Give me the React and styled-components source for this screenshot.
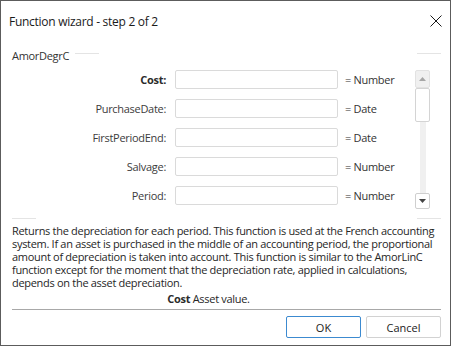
import React from 'react';
import styled, { createGlobalStyle } from 'styled-components';

const GlobalStyle = createGlobalStyle`
  html, body {
    margin: 0;
    padding: 0;
    background: #fff;
  }
  body {
    font-family: "Open Sans", "Noto Sans", sans-serif;
    font-size: 11px;
    letter-spacing: -0.3px;
    color: #222;
  }
`;

const Dialog = styled.div`
  width: 449px;
  height: 344px;
  border: 1px solid #5c5c5c;
  display: flex;
  flex-direction: column;
  background: #fff;
`;

const TitleBar = styled.div`
  height: 40px;
  padding: 0 8px;
  display: flex;
  align-items: center;
  justify-content: space-between;
  font-size: 12px;
  letter-spacing: -0.28px;
  color: #1a1a1a;
`;

const CloseButton = styled.div`
  width: 12px;
  height: 12px;
  display: flex;
  cursor: pointer;
`;

const Body = styled.div`
  flex: 1;
  display: flex;
  flex-direction: column;
  padding: 0 9px 0 11px;
`;

const LegendRow = styled.div`
  margin-top: 6px;
  height: 16px;
  display: flex;
  align-items: center;
  color: #333;
`;

const Segment = styled.div`
  width: 24px;
  height: 1px;
  background: #e4e4e4;
  align-self: flex-start;
  margin-top: ${(p) => p.top || 0}px;
  margin-left: ${(p) => p.left || 0}px;
`;

const Spacer = styled.div`
  flex: 1;
`;

const ParamsArea = styled.div`
  margin-top: 7px;
  height: 139px;
  display: flex;
`;

const ParamsGrid = styled.div`
  display: grid;
  grid-template-columns: 163px 163px 77px;
  grid-auto-rows: 19px;
  row-gap: 10px;
  align-items: center;
  align-content: start;
`;

const ParamLabel = styled.div`
  text-align: right;
  padding-right: 9px;
  color: ${(p) => (p.bold ? '#2b2b2b' : '#3c3c3c')};
  font-weight: ${(p) => (p.bold ? 700 : 400)};
`;

const ParamInput = styled.input`
  box-sizing: border-box;
  width: 163px;
  height: 19px;
  border: 1px solid #dadada;
  border-radius: 2px;
  margin: 0;
  padding: 0 4px;
  font: inherit;
  outline: none;
`;

const ParamType = styled.div`
  padding-left: 7px;
  color: #333;
`;

const Scrollbar = styled.div`
  width: 15px;
  height: 139px;
  display: flex;
  flex-direction: column;
`;

const ScrollButton = styled.div`
  box-sizing: border-box;
  height: ${(p) => p.h}px;
  border: 1px solid ${(p) => (p.disabled ? '#e2e2e2' : '#cfcfcf')};
  border-radius: 2px;
  background: ${(p) => (p.disabled ? '#f0f0f0' : '#fff')};
  display: flex;
  align-items: center;
  justify-content: center;
`;

const Thumb = styled.div`
  box-sizing: border-box;
  height: 34px;
  border: 1px solid #d4d4d4;
  border-radius: 2px;
  background: #fff;
`;

const Track = styled.div`
  flex: 1;
  display: flex;
  justify-content: center;
`;

const TrackStrip = styled.div`
  width: 6px;
  background: #f0f0f0;
`;

const BottomSegments = styled.div`
  margin-top: 9px;
  height: 1px;
  display: flex;
  justify-content: space-between;
`;

const Description = styled.div`
  margin-top: 5px;
  line-height: 13px;
  color: #262626;
  white-space: nowrap;
`;

const Hint = styled.div`
  margin-top: 3px;
  line-height: 13px;
  text-align: center;
  padding-right: 36px;
  color: #262626;

  b {
    color: #2b2b2b;
  }
`;

const Separator = styled.div`
  margin-top: 4px;
  height: 1px;
  background: #a8a8a8;
`;

const ButtonRow = styled.div`
  margin-top: 6px;
  display: flex;
  justify-content: flex-end;
  gap: 5px;
`;

const Button = styled.button`
  box-sizing: border-box;
  width: 75px;
  height: 22px;
  border: 1px solid ${(p) => (p.primary ? '#3c8ad0' : '#d2d2d2')};
  border-radius: 2px;
  background: #fff;
  font: inherit;
  color: #222;
  padding: 0;
  cursor: pointer;
`;

const params = [
  { name: 'Cost', type: 'Number', bold: true },
  { name: 'PurchaseDate', type: 'Date' },
  { name: 'FirstPeriodEnd', type: 'Date' },
  { name: 'Salvage', type: 'Number' },
  { name: 'Period', type: 'Number' },
];

const descriptionLines = [
  'Returns the depreciation for each period. This function is used at the French accounting',
  'system. If an asset is purchased in the middle of an accounting period, the proportional',
  'amount of depreciation is taken into account. This function is similar to the AmorLinC',
  'function except for the moment that the depreciation rate, applied in calculations,',
  'depends on the asset depreciation.',
];

const Arrow = ({ up, color }) => (
  <svg width="7" height="4" viewBox="0 0 7 4">
    <path d={up ? 'M0 4 L3.5 0 L7 4 Z' : 'M0 0 L3.5 4 L7 0 Z'} fill={color} />
  </svg>
);

const App = () => (
  <>
    <GlobalStyle />
    <Dialog>
      <TitleBar>
        <span>Function wizard - step 2 of 2</span>
        <CloseButton>
          <svg width="12" height="12" viewBox="0 0 12 12">
            <path d="M0.5 0.5 L11.5 11.5 M11.5 0.5 L0.5 11.5" stroke="#1a1a1a" strokeWidth="1" />
          </svg>
        </CloseButton>
      </TitleBar>
      <Body>
        <LegendRow>
          <span>AmorDegrC</span>
          <Segment top={6} left={6} />
          <Spacer />
          <Segment top={6} />
        </LegendRow>
        <ParamsArea>
          <ParamsGrid>
            {params.map((p) => (
              <React.Fragment key={p.name}>
                <ParamLabel bold={p.bold}>{p.name}:</ParamLabel>
                <ParamInput />
                <ParamType>= {p.type}</ParamType>
              </React.Fragment>
            ))}
          </ParamsGrid>
          <Scrollbar>
            <ScrollButton h={18} disabled>
              <Arrow up color="#a6a6a6" />
            </ScrollButton>
            <Thumb />
            <Track>
              <TrackStrip />
            </Track>
            <ScrollButton h={16}>
              <Arrow color="#444" />
            </ScrollButton>
          </Scrollbar>
        </ParamsArea>
        <BottomSegments>
          <Segment />
          <Segment />
        </BottomSegments>
        <Description>
          {descriptionLines.map((line) => (
            <div key={line}>{line}</div>
          ))}
        </Description>
        <Hint>
          <b>Cost</b> Asset value.
        </Hint>
        <Separator />
        <ButtonRow>
          <Button primary>OK</Button>
          <Button>Cancel</Button>
        </ButtonRow>
      </Body>
    </Dialog>
  </>
);

export default App;
